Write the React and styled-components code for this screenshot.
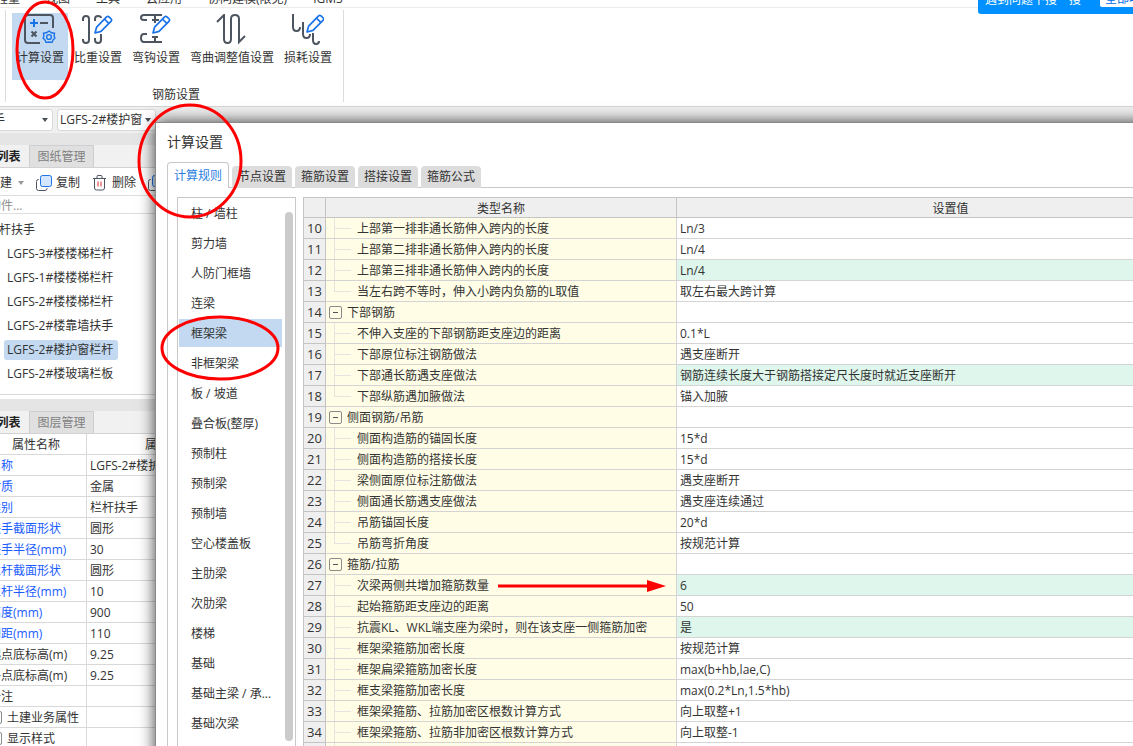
import React from 'react'
import styled, { createGlobalStyle, css } from 'styled-components'

const GlobalStyle = createGlobalStyle`
  * {
    box-sizing: border-box;
  }

  body {
    margin: 0;
    overflow: hidden;
    color: #333;
    background: #f0f0f0;
    font: 12px/16px "Open Sans", "Noto Sans CJK SC", sans-serif;
  }

  button, input, select {
    margin: 0;
    padding: 0;
    border: 0;
    color: inherit;
    background: none;
    font: inherit;
    white-space: nowrap;
  }

  ul {
    margin: 0;
    padding: 0;
    list-style: none;
  }

  table {
    table-layout: fixed;
    border-collapse: separate;
    border-spacing: 0;
  }

  th, td {
    height: 21px;
    padding: 2px 3px 0;
    font-weight: 400;
    white-space: nowrap;
    overflow: hidden;
  }
`

const menus = ['工程量', '视图', '工具', '云应用', '协同建模(限免)', 'IGMS']

const components = [
  'LGFS-3#楼楼梯栏杆',
  'LGFS-1#楼楼梯栏杆',
  'LGFS-2#楼楼梯栏杆',
  'LGFS-2#楼靠墙扶手',
  'LGFS-2#楼护窗栏杆',
  'LGFS-2#楼玻璃栏板',
]

const properties = [
  { name: '名称', value: 'LGFS-2#楼护窗栏杆', blue: true },
  { name: '材质', value: '金属', blue: true },
  { name: '类别', value: '栏杆扶手', blue: true },
  { name: '扶手截面形状', value: '圆形', blue: true },
  { name: '扶手半径(mm)', value: '30', blue: true },
  { name: '栏杆截面形状', value: '圆形', blue: true },
  { name: '栏杆半径(mm)', value: '10', blue: true },
  { name: '高度(mm)', value: '900', blue: true },
  { name: '间距(mm)', value: '110', blue: true },
  { name: '起点底标高(m)', value: '9.25' },
  { name: '终点底标高(m)', value: '9.25' },
  { name: '备注', value: '' },
  { name: '土建业务属性', value: '', group: true },
  { name: '显示样式', value: '', group: true },
]

const ruleTabs = ['计算规则', '节点设置', '箍筋设置', '搭接设置', '箍筋公式']

const categories = [
  '柱 / 墙柱', '剪力墙', '人防门框墙', '连梁', '框架梁', '非框架梁',
  '板 / 坡道', '叠合板(整厚)', '预制柱', '预制梁', '预制墙', '空心楼盖板',
  '主肋梁', '次肋梁', '楼梯', '基础', '基础主梁 / 承...', '基础次梁',
]

const rules = [
  { no: 10, name: '上部第一排非通长筋伸入跨内的长度', value: 'Ln/3' },
  { no: 11, name: '上部第二排非通长筋伸入跨内的长度', value: 'Ln/4' },
  { no: 12, name: '上部第三排非通长筋伸入跨内的长度', value: 'Ln/4', changed: true },
  { no: 13, name: '当左右跨不等时，伸入小跨内负筋的L取值', value: '取左右最大跨计算', last: true },
  { no: 14, name: '下部钢筋', value: '', group: true },
  { no: 15, name: '不伸入支座的下部钢筋距支座边的距离', value: '0.1*L' },
  { no: 16, name: '下部原位标注钢筋做法', value: '遇支座断开' },
  { no: 17, name: '下部通长筋遇支座做法', value: '钢筋连续长度大于钢筋搭接定尺长度时就近支座断开', changed: true },
  { no: 18, name: '下部纵筋遇加腋做法', value: '锚入加腋', last: true },
  { no: 19, name: '侧面钢筋/吊筋', value: '', group: true },
  { no: 20, name: '侧面构造筋的锚固长度', value: '15*d' },
  { no: 21, name: '侧面构造筋的搭接长度', value: '15*d' },
  { no: 22, name: '梁侧面原位标注筋做法', value: '遇支座断开' },
  { no: 23, name: '侧面通长筋遇支座做法', value: '遇支座连续通过' },
  { no: 24, name: '吊筋锚固长度', value: '20*d' },
  { no: 25, name: '吊筋弯折角度', value: '按规范计算', last: true },
  { no: 26, name: '箍筋/拉筋', value: '', group: true },
  { no: 27, name: '次梁两侧共增加箍筋数量', value: '6', changed: true },
  { no: 28, name: '起始箍筋距支座边的距离', value: '50' },
  { no: 29, name: '抗震KL、WKL端支座为梁时，则在该支座一侧箍筋加密', value: '是', changed: true },
  { no: 30, name: '框架梁箍筋加密长度', value: '按规范计算' },
  { no: 31, name: '框架扁梁箍筋加密长度', value: 'max(b+hb,lae,C)' },
  { no: 32, name: '框支梁箍筋加密长度', value: 'max(0.2*Ln,1.5*hb)' },
  { no: 33, name: '框架梁箍筋、拉筋加密区根数计算方式', value: '向上取整+1' },
  { no: 34, name: '框架梁箍筋、拉筋非加密区根数计算方式', value: '向上取整-1' },
  { no: 35, name: '', value: '' },
]

/* ---------- shell ---------- */

const Screen = styled.div`
  position: relative;
  height: 100vh;
  overflow: hidden;
`

// the application window is scrolled a little past the top left corner
const AppWindow = styled.div`
  margin: -12px 0 0 -60px;
`

const MenuBar = styled.nav`
  display: flex;
  align-items: center;
  gap: 26px;
  height: 20px;
  padding: 2px 0 0 44px;
  border-bottom: 1px solid #ececec;
  background: #fff;
`

const SearchHint = styled.div`
  display: flex;
  gap: 19px;
  align-self: flex-start;
  width: 155px;
  height: 24px;
  margin-left: auto;
  padding-left: 7px;
  border-radius: 0 0 0 3px;
  color: #fff;
  background: #0090ff;
  z-index: 1;

  span {
    padding-top: 2px;
  }

  button {
    flex: 1;
    height: 17px;
    padding: 1px 0 0 5px;
    overflow: hidden;
    border-radius: 0 0 0 2px;
    text-align: left;
    color: #0068e8;
    background: #fff;
  }
`

/* ---------- ribbon ---------- */

const Ribbon = styled.div`
  display: flex;
  height: 99px;
  padding: 2px 0 4px 65px;
  border-bottom: 1px solid #d4d4d4;
  background: #fff;
`

const RibbonGroup = styled.section`
  padding: 3px 7px 0 6px;
  border: solid #dcdcdc;
  border-width: 0 1px;
`

const RibbonButtons = styled.div`
  display: flex;
  gap: 2px;
  margin-bottom: 7px;
`

const RibbonButton = styled.button`
  display: flex;
  flex-direction: column;
  align-items: center;
  gap: 4px;
  height: 67px;
  padding: 1px 4px 0;
  background: ${({ $active }) => ($active ? '#c2d9f1' : 'transparent')};
`

const RibbonLabel = styled.div`
  padding-left: 4px;
  text-align: center;
`

const Glyph = styled.svg`
  flex: none;
  fill: none;
  stroke: #4d5560;
  stroke-width: ${({ $thin }) => ($thin ? 1 : 2)};

  .blue {
    stroke: #1b73e8;
  }

  .red {
    stroke: #d62b2b;
  }
`

/* ---------- left side ---------- */

const SelectBar = styled.div`
  display: flex;
  gap: 4px;
  height: 26px;
  padding: 2px 0 2px 14px;
`

const Combo = styled.label`
  position: relative;
  width: 99px;
  height: 22px;

  select {
    width: 100%;
    height: 100%;
    padding-left: 2px;
    border: 1px solid #d8d8d8;
    border-radius: 3px;
    background: #fff;
    appearance: none;
  }

  &::after {
    content: '';
    position: absolute;
    top: 9px;
    right: 5px;
    border: 3px solid transparent;
    border-top: 4px solid #4a4f58;
    border-bottom: 0;
  }
`

const Side = styled.aside`
  width: 300px;
`

const Strip = styled.div`
  height: 12px;
  background: #e5e5e5;
`

const SideTabs = styled.div`
  display: flex;
  height: 23px;
  padding-left: 24px;
  border-bottom: 1px solid #d2d2d2;
  background: #f1f1f1;
`

const SideTab = styled.button`
  width: 65px;
  border: 1px solid #cdcfd2;
  border-bottom: 0;
  color: #808080;
  background: #e0e0e0;

  ${({ $active }) => $active && css`
    border-color: transparent;
    color: #222;
    background: #f1f1f1;
    font-weight: 700;
  `}
`

const Toolbar = styled.div`
  display: flex;
  gap: 12px;
  height: 28px;
  padding: 2px 0 0 48px;
  border-bottom: 1px solid #dedede;
  background: #fff;
`

const ToolButton = styled.button`
  display: flex;
  align-items: center;
  gap: 4px;
`

const Caret = styled.i`
  margin: 0 0 0 2px;
  border: 3px solid transparent;
  border-top: 4px solid #999;
  border-bottom: 0;
`

const Search = styled.input`
  display: block;
  width: 100%;
  height: 18px;
  padding: 2px 0 0 25px;
  border-bottom: 1px solid #dedede;
  background: #fff;

  &::placeholder {
    color: #8f8f8f;
  }
`

const Tree = styled.div`
  padding: 4px 0 8px 47px;
  border-bottom: 1px solid #d8d8d8;
  background: #fff;
  line-height: 24px;

  ul {
    padding-left: 17px;
  }

  li {
    display: flex;
    align-items: center;
    height: 24px;
  }
`

const TreeItem = styled.button`
  height: 20px;
  padding: 0 5px 0 3px;
  border-radius: 3px;
  line-height: 20px;
  background: ${({ $active }) => ($active ? '#c2d9f1' : 'transparent')};
`

const Gap = styled.div`
  height: 4px;
  background: #fff;
`

const PropertyTable = styled.table`
  width: 277px;
  margin-left: 23px;
  background: #fff;

  th, td {
    border: solid #d9d9d9;
    border-width: 0 1px 1px 0;
  }
`

const PropertyName = styled.td`
  color: ${({ $blue }) => ($blue ? '#1a5cff' : '#333')};

  div {
    display: flex;
    align-items: center;
    gap: 5px;
  }
`

const Expander = styled.button`
  display: flex;
  align-items: center;
  justify-content: center;
  flex: none;
  width: 13px;
  height: 13px;
  margin-bottom: 2px;
  border: 1px solid #8c8c8c;
  border-radius: 2px;

  &::before {
    content: '';
    width: 5px;
    height: 1px;
    background: #555;
  }
`

/* ---------- dialog ---------- */

const Dialog = styled.section`
  position: absolute;
  top: 122px;
  right: -104px;
  bottom: -30px;
  left: 155px;
  display: flex;
  flex-direction: column;
  padding: 0 11px;
  overflow: hidden;
  border: 1px solid #8a8a8a;
  background: #fff;
  box-shadow: 0 0 15px rgba(0, 0, 0, 0.75);
`

const DialogTitle = styled.h1`
  margin: 9px 0 10px;
  font-size: 14px;
  font-weight: 400;
  line-height: 20px;
`

const DialogTabs = styled.div`
  display: flex;
  align-items: flex-end;
  gap: 3px;
  height: 26px;
  box-shadow: inset 0 -1px #c8c8c8;
`

const DialogTab = styled.button`
  width: 60px;
  height: 22px;
  border-radius: 4px 4px 0 0;
  background: #dcdcdc;

  ${({ $active }) => $active && css`
    width: 62px;
    height: 26px;
    border: 1px solid #c8c8c8;
    border-bottom: 0;
    color: #2a7de1;
    background: #fff;
  `}
`

const DialogBody = styled.div`
  display: flex;
  align-items: stretch;
  flex: 1;
  gap: 7px;
  min-height: 0;
  padding: 9px 0 0 9px;
  border-left: 1px solid #c8c8c8;
`

const CategoryBox = styled.div`
  display: flex;
  flex: none;
  gap: 3px;
  width: 119px;
  padding: 1px;
  border: 1px solid #c8c8c8;

  ul {
    display: flex;
    flex-direction: column;
    gap: 2px;
    width: 103px;
  }
`

const Category = styled.button`
  width: 100%;
  height: 28px;
  padding: 2px 0 0 12px;
  text-align: left;
  background: ${({ $active }) => ($active ? '#c2d9f1' : 'transparent')};
`

const ScrollThumb = styled.div`
  width: 8px;
  height: 529px;
  margin-top: 13px;
  border-radius: 4px;
  background: #cbcbcb;
`

const TableArea = styled.div`
  flex: 1;
  min-width: 0;
`

const RuleTable = styled.table`
  width: 100%;
  border: solid #c4c4c4;
  border-width: 1px 0 0 1px;

  th, td {
    border: solid #d4d4d4;
    border-width: 0 1px 1px 0;
  }

  thead th {
    height: 20px;
    border-color: #c4c4c4;
    background: #efefef;
  }

  tbody th {
    padding: 0;
    border-color: #c4c4c4;
    background: #efefef;
    font-size: 13px;
  }
`

const NameCell = styled.td`
  position: relative;
  background: #fffde6;

  div {
    display: flex;
    align-items: center;
    gap: 5px;
    padding-left: ${({ $group }) => ($group ? 0 : 28)}px;
  }

  ${({ $group, $last }) => !$group && css`
    &::before {
      content: '';
      position: absolute;
      top: 0;
      left: 8px;
      width: 1px;
      height: ${$last ? 10 : 21}px;
      background: #e6e4e0;
    }

    &::after {
      content: '';
      position: absolute;
      top: 10px;
      left: 8px;
      width: 17px;
      height: 1px;
      background: #e6e4e0;
    }
  `}
`

const ValueCell = styled.td`
  background: ${({ $changed }) => ($changed ? '#def6eb' : '#fff')};
`

const Marks = styled.svg`
  position: absolute;
  inset: 0;
  width: 100%;
  height: 100%;
  fill: none;
  stroke: #f00;
  stroke-width: 3;
  pointer-events: none;
`

/* ---------- icons ---------- */

const Pencil = ({ x, y }) => (
  <g className="blue" transform={`translate(${x} ${y})`} strokeWidth="1.7" strokeLinejoin="round">
    <path d="M1 18 2.6 12.2 12.6 1.8Q13.8.8 15 1.8L17.2 4Q18.200 5 17.2 6.200L7 16.400Z" />
    <path d="M10.4 4 15 8.6" />
  </g>
)

const CalcIcon = () => (
  <Glyph width="32" height="32">
    <path d="M16 29H4Q1 29 1 26V4Q1 1 4 1H26Q29 1 29 4V14" />
    <path className="blue" d="M6 9H14M10 5V13" />
    <path d="M16 9H24M7.5 17.5 12.5 22.5M12.5 17.5 7.5 22.5" />
    <g className="blue" strokeWidth="1.4" strokeLinejoin="round">
      <path d="M25 17 27.6 18.8 30.6 19.2 30 22 31 24 29 26 28 28.4 25 28 22 28.4 21 26 19 24 20 22 19.4 19.2 22.4 18.8Z" />
      <circle cx="25" cy="23" r="2.4" />
    </g>
  </Glyph>
)

const WeightIcon = () => (
  <Glyph width="32" height="32">
    <path d="M1 7V5Q1 2 4 2Q7 2 7 5V26Q7 29 4 29Q1 29 1 26V25" />
    <path d="M13 7V5Q13 2 16 2Q19 2 19 4M19 20V26Q19 29 16 29Q13 29 13 26V24" />
    <Pencil x="12" y="1" />
  </Glyph>
)

const HookIcon = () => (
  <Glyph width="32" height="32">
    <path d="M22 1H4Q1 1 1 3.5T4 6H7M15 1V9M12 6H19" />
    <path d="M7 20H4Q1 20 1 24T4 28H22M15 22V28M12 23H18" />
    <Pencil x="12" y="1" />
  </Glyph>
)

const BendIcon = () => (
  <Glyph width="32" height="32">
    <path d="M1 8 8 1V25Q8 29 11.5 29T15 25V5Q15 1 19 1T23 5V28L29 22" />
  </Glyph>
)

const LossIcon = () => (
  <Glyph width="32" height="32">
    <path d="M1 0V13Q1 17 4.5 17T8 13M11 8V20Q11 24 14.5 24T18 20M21 19V26Q21 30 24 30T27 27" />
    <Pencil x="14" y="0" />
  </Glyph>
)

const CopyIcon = () => (
  <Glyph $thin width="16" height="16">
    <path d="M3 4.5H2.5Q.5 4.5.5 6.5V13.5Q.5 15.5 2.5 15.5H9Q11 15.5 11 13.5V13" />
    <rect className="blue" x="4.5" y=".5" width="11" height="11" rx="2" fill="#d4e6ff" />
  </Glyph>
)

const TrashIcon = () => (
  <Glyph $thin width="16" height="16">
    <path d="M1 3.5H14M5 3V1.5Q5 .5 6 .5H9Q10 .5 10 1.5V3M2.5 4V13Q2.5 15 4.5 15H10.5Q12.5 15 12.5 13V4" />
    <path className="red" d="M6 6.5V11.5M9 6.5V11.5" />
  </Glyph>
)

const ribbonItems = [
  { label: '计算设置', Icon: CalcIcon, active: true },
  { label: '比重设置', Icon: WeightIcon },
  { label: '弯钩设置', Icon: HookIcon },
  { label: '弯曲调整值设置', Icon: BendIcon },
  { label: '损耗设置', Icon: LossIcon },
]

/* ---------- parts ---------- */

const RibbonPart = () => (
  <Ribbon>
    <RibbonGroup>
      <RibbonButtons>
        {ribbonItems.map(({ label, Icon, active }) => (
          <RibbonButton key={label} $active={active}>
            <Icon />
            {label}
          </RibbonButton>
        ))}
      </RibbonButtons>
      <RibbonLabel>钢筋设置</RibbonLabel>
    </RibbonGroup>
  </Ribbon>
)

const ComponentPanel = () => (
  <>
    <Strip />
    <SideTabs>
      <SideTab $active>构件列表</SideTab>
      <SideTab>图纸管理</SideTab>
    </SideTabs>
    <Toolbar>
      <ToolButton>新建 <Caret /></ToolButton>
      <ToolButton><CopyIcon />复制</ToolButton>
      <ToolButton><TrashIcon />删除</ToolButton>
      <ToolButton aria-label="层间复制"><CopyIcon /></ToolButton>
    </Toolbar>
    <Search placeholder="搜索构件..." aria-label="搜索构件" />
    <Tree>
      栏杆扶手
      <ul>
        {components.map((name, i) => (
          <li key={name}><TreeItem $active={i === 4}>{name}</TreeItem></li>
        ))}
      </ul>
    </Tree>
    <Gap />
  </>
)

const PropertyPanel = () => (
  <>
    <Strip />
    <SideTabs>
      <SideTab $active>属性列表</SideTab>
      <SideTab>图层管理</SideTab>
    </SideTabs>
    <PropertyTable>
      <colgroup>
        <col width="23" />
        <col width="101" />
        <col />
      </colgroup>
      <thead>
        <tr><th /><th>属性名称</th><th>属性值</th></tr>
      </thead>
      <tbody>
        {properties.map(({ name, value, blue, group }, i) => (
          <tr key={name}>
            <td>{i + 1}</td>
            <PropertyName $blue={blue}>
              <div>{group && <Expander aria-label={name} />}{name}</div>
            </PropertyName>
            <td>{value}</td>
          </tr>
        ))}
      </tbody>
    </PropertyTable>
  </>
)

const SettingsDialog = () => (
  <Dialog role="dialog" aria-label="计算设置">
    <DialogTitle>计算设置</DialogTitle>
    <DialogTabs>
      {ruleTabs.map((tab, i) => <DialogTab key={tab} $active={i === 0}>{tab}</DialogTab>)}
    </DialogTabs>
    <DialogBody>
      <CategoryBox>
        <ul>
          {categories.map((name, i) => (
            <li key={name}><Category $active={i === 4}>{name}</Category></li>
          ))}
        </ul>
        <ScrollThumb />
      </CategoryBox>
      <TableArea>
        <RuleTable>
          <colgroup>
            <col width="22" />
            <col width="351" />
            <col />
          </colgroup>
          <thead>
            <tr><th /><th>类型名称</th><th>设置值</th></tr>
          </thead>
          <tbody>
            {rules.map(({ no, name, value, group, last, changed }) => (
              <tr key={no}>
                <th>{no}</th>
                <NameCell $group={group} $last={last}>
                  <div>{group && <Expander aria-label={name} />}{name}</div>
                </NameCell>
                <ValueCell $changed={changed}>{value}</ValueCell>
              </tr>
            ))}
          </tbody>
        </RuleTable>
      </TableArea>
    </DialogBody>
  </Dialog>
)

const App = () => (
  <Screen>
    <GlobalStyle />
    <AppWindow>
      <MenuBar>
        {menus.map((menu) => <span key={menu}>{menu}</span>)}
        <SearchHint>
          <span>遇到问题下搜一搜</span>
          <button>全部功能</button>
        </SearchHint>
      </MenuBar>
      <RibbonPart />
      <SelectBar>
        <Combo>
          <select aria-label="构件类型"><option>栏杆扶手</option></select>
        </Combo>
        <Combo>
          <select aria-label="构件"><option>LGFS-2#楼护窗</option></select>
        </Combo>
      </SelectBar>
      <Side>
        <ComponentPanel />
        <PropertyPanel />
      </Side>
    </AppWindow>
    <SettingsDialog />
    <Marks>
      <ellipse cx="45" cy="50" rx="28" ry="48" />
      <ellipse cx="190" cy="161" rx="51" ry="56" />
      <ellipse cx="220" cy="348" rx="58" ry="31" />
      <path d="M498 586H648" />
      <path d="M647 580 666 586 647 592Z" fill="#f00" stroke="none" />
    </Marks>
  </Screen>
)

export default App
